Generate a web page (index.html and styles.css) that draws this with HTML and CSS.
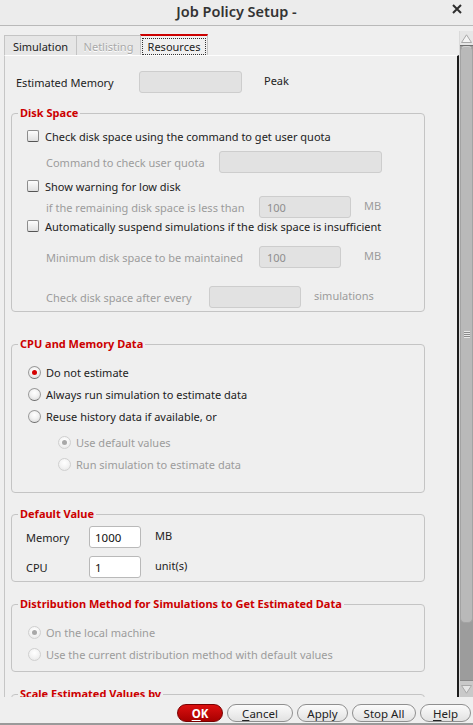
FILE: index.html
```html
<!DOCTYPE html>
<html>
<head>
<meta charset="utf-8">
<link rel="stylesheet" href="styles.css">
</head>
<body>
<div class="window">
  <header class="titlebar">
    <span class="title">Job Policy Setup -</span>
    <svg class="close" width="10" height="10" viewBox="0 0 10 10"><path d="M1 1L9 9M9 1L1 9" stroke="#2e2e2e" stroke-width="2"/></svg>
  </header>
  <div class="main">
    <div class="left">
      <div class="tabs">
        <div class="tab t-sim">Simulation</div>
        <div class="tab t-net disabled">Netlisting</div>
        <div class="tab t-res active"><span class="focus">Resources</span></div>
      </div>
      <div class="panel">
        <div class="estrow">
          <span class="estlabel">Estimated Memory</span>
          <span class="input dis w102"></span>
          <span class="peak">Peak</span>
        </div>

        <fieldset class="group g-disk">
          <legend>Disk Space</legend>
          <div class="row chk r1"><span class="checkbox"></span><span>Check disk space using the command to get user quota</span></div>
          <div class="row sub r2"><span class="lbl l173 dtext">Command to check user quota</span><span class="input dis w162"></span></div>
          <div class="row chk r3"><span class="checkbox"></span><span>Show warning for low disk</span></div>
          <div class="row sub r4"><span class="lbl l213 dtext">if the remaining disk space is less than</span><span class="input dis w91">100</span><span class="unit u13 dtext">MB</span></div>
          <div class="row chk r5"><span class="checkbox"></span><span>Automatically suspend simulations if the disk space is insufficient</span></div>
          <div class="row sub r6"><span class="lbl l213 dtext">Minimum disk space to be maintained</span><span class="input dis w81">100</span><span class="unit u23 dtext">MB</span></div>
          <div class="row sub r7"><span class="lbl l163 dtext">Check disk space after every</span><span class="input dis w91"></span><span class="unit u13 dtext">simulations</span></div>
        </fieldset>

        <fieldset class="group g-cpu">
          <legend>CPU and Memory Data</legend>
          <div class="row rad c1"><span class="radio on"></span><span>Do not estimate</span></div>
          <div class="row rad c2"><span class="radio"></span><span>Always run simulation to estimate data</span></div>
          <div class="row rad c3"><span class="radio"></span><span>Reuse history data if available, or</span></div>
          <div class="row rad subrad c4"><span class="radio dis on"></span><span class="dtext">Use default values</span></div>
          <div class="row rad subrad c5"><span class="radio dis"></span><span class="dtext">Run simulation to estimate data</span></div>
        </fieldset>

        <fieldset class="group g-def">
          <legend>Default Value</legend>
          <div class="row dv d1"><span class="dlabel">Memory</span><span class="input white w52">1000</span><span class="dunit">MB</span></div>
          <div class="row dv d2"><span class="dlabel">CPU</span><span class="input white w52">1</span><span class="dunit">unit(s)</span></div>
        </fieldset>

        <fieldset class="group g-dist">
          <legend>Distribution Method for Simulations to Get Estimated Data</legend>
          <div class="row rad e1"><span class="radio dis on"></span><span class="dtext">On the local machine</span></div>
          <div class="row rad e2"><span class="radio dis"></span><span class="dtext">Use the current distribution method with default values</span></div>
        </fieldset>

        <fieldset class="group g-scale">
          <legend>Scale Estimated Values by</legend>
          <div class="row rad"><span>&nbsp;</span></div>
        </fieldset>
      </div>
    </div>
    <div class="scrollbar">
      <div class="sb-btn sb-up"><svg width="11" height="9" viewBox="0 0 11 9"><path d="M0.5 8.5L5.5 0.8L10.5 8.5Z" fill="#f4f4f4" stroke="#a8a8a8" stroke-width="1"/></svg></div>
      <div class="sb-track">
        <div class="sb-thumb"><span class="grip"></span></div>
      </div>
      <div class="sb-btn sb-down"><svg width="11" height="9" viewBox="0 0 11 9"><path d="M0.5 0.5L5.5 8.2L10.5 0.5Z" fill="#e6e6e6" stroke="#a8a8a8" stroke-width="1"/></svg></div>
    </div>
  </div>
  <footer class="buttons">
    <span class="btn ok"><u>O</u>K</span>
    <span class="btn b-cancel"><u>C</u>ancel</span>
    <span class="btn b-apply">Apply</span>
    <span class="btn b-stop">Stop All</span>
    <span class="btn b-help"><u>H</u>elp</span>
  </footer>
</div>
</body>
</html>
```

FILE: styles.css
```css
html, body {
  margin: 0;
  padding: 0;
  background: #efefef;
}
body {
  font-family: "Noto Sans", "Open Sans", sans-serif;
  font-size: 11px;
  color: #222;
}
.window {
  width: 473px;
  height: 725px;
  display: flex;
  flex-direction: column;
  overflow: hidden;
  background: #efefef;
}
.titlebar {
  height: 26px;
  flex: none;
  box-sizing: border-box;
  border-bottom: 1px solid #b9b9b9;
  background: #ececec;
  display: flex;
  align-items: center;
  justify-content: center;
  position: relative;
}
.title {
  font-size: 14.5px;
  font-weight: 600;
  color: #333;
  margin-top: -4px;
}
.close {
  position: absolute;
  right: 11px;
  top: 4px;
}
.main {
  flex: 1;
  display: flex;
  padding-top: 5px;
  min-height: 0;
}
.left {
  width: 460px;
  flex: none;
  display: flex;
  flex-direction: column;
  padding-top: 4px;
  box-sizing: border-box;
}
.tabs {
  display: flex;
  padding-left: 4px;
  height: 20px;
  flex: none;
}
.tab {
  box-sizing: border-box;
  height: 20px;
  border: 1px solid #c4c4c4;
  border-bottom: none;
  background: #e6e6e6;
  display: flex;
  align-items: center;
  justify-content: center;
  color: #222;
  padding-top: 2px;
}
.t-sim { width: 73px; }
.t-net { width: 65px; margin-left: -1px; color: #a9a9a9; text-shadow: 0 1px 0 #fff; }
.t-res {
  width: 68px;
  margin-left: -1px;
  background: #f0f0f0;
  border-top: 2px solid #cc0000;
  height: 21px;
  margin-top: -1px;
  position: relative;
  z-index: 2;
  padding-top: 1px;
}
.focus {
  border: 1px dotted #333;
  padding: 0 5px;
  line-height: 15px;
  margin-top: 1px;
}
.panel {
  flex: 1;
  margin-left: 4px;
  width: 455px;
  box-sizing: border-box;
  border-left: 1px solid #c6c6c6;
  border-top: 1px solid #fdfdfd;
  border-right: 2px solid #1c1c1c;
  padding-left: 6px;
  overflow: hidden;
  min-height: 0;
}
.estrow {
  display: flex;
  align-items: center;
  height: 22px;
  margin-top: 15px;
  padding-left: 5px;
}
.estlabel { width: 123px; }
.peak { margin-left: 22px; margin-top: -4px; }

.input {
  box-sizing: border-box;
  height: 22px;
  border-radius: 3px;
  display: flex;
  align-items: center;
  padding-left: 7px;
  flex: none;
}
.input.dis {
  background: #e2e2e2;
  border: 1px solid #cdcdcd;
  color: #8e8e8e;
}
.input.white {
  background: #fff;
  border: 1px solid #b9b9b9;
  color: #111;
  padding-left: 5px;
  font-size: 11.5px;
}
.w102 { width: 103px; }
.w162 { width: 163px; }
.w91 { width: 92px; }
.w81 { width: 82px; }
.w52 { width: 52px; }

.group {
  margin: 0;
  padding: 0;
  width: 414px;
  box-sizing: border-box;
  border: 1px solid #c4c4c4;
  border-radius: 4px;
  min-width: 0;
}
.group legend {
  color: #cc0000;
  font-weight: bold;
  font-size: 11px;
  line-height: 14px;
  padding: 0 2px;
  margin-left: 6px;
}
.row {
  display: flex;
  align-items: center;
}
.row.chk, .row.rad { height: 16px; padding-left: 15px; }
.row.sub { height: 22px; padding-left: 34px; }
.dtext { color: #9c9c9c; }
.lbl { flex: none; }
.l173 { width: 173px; }
.l213 { width: 213px; }
.l163 { width: 163px; }
.unit { margin-top: -3px; }
.u13 { margin-left: 13px; }
.u23 { margin-left: 23px; }

.checkbox {
  width: 10px;
  height: 10px;
  border: 1px solid #8d8d8d;
  border-bottom-color: #555;
  border-radius: 2px;
  background: linear-gradient(#fdfdfd, #e0e0e0);
  margin-right: 6px;
  flex: none;
}
.radio {
  width: 11px;
  height: 11px;
  border: 1px solid #9a9a9a;
  border-bottom-color: #6c6c6c;
  border-radius: 50%;
  background: radial-gradient(circle at 50% 35%, #ffffff 0%, #f2f2f2 45%, #d4d4d4 100%);
  margin-left: 1px;
  margin-right: 5px;
  flex: none;
  display: flex;
  align-items: center;
  justify-content: center;
}
.radio.on::after {
  content: "";
  width: 5px;
  height: 5px;
  border-radius: 50%;
  background: #d40000;
}
.radio.dis {
  border-color: #d0d0d0;
  background: radial-gradient(circle at 50% 35%, #ffffff 0%, #f4f4f4 50%, #e4e4e4 100%);
}
.radio.dis.on::after { background: #a8a8a8; }

.g-disk { margin-top: 13px; padding-bottom: 3px; }
.g-disk .r1 { margin-top: 8px; }
.g-disk .r2 { margin-top: 7px; }
.g-disk .r3 { margin-top: 5px; }
.g-disk .r4 { margin-top: 2px; }
.g-disk .r5 { margin-top: 0; }
.g-disk .r6 { margin-top: 12px; }
.g-disk .r7 { margin-top: 18px; }

.g-cpu { margin-top: 25px; padding-bottom: 20px; }
.g-cpu .c1 { margin-top: 13px; }
.g-cpu .c2, .g-cpu .c3 { margin-top: 6px; }
.g-cpu .c4 { margin-top: 10px; }
.g-cpu .c5 { margin-top: 6px; }
.subrad { padding-left: 45px !important; }

.g-def { margin-top: 14px; padding-bottom: 3px; }
.row.dv { height: 22px; padding-left: 14px; }
.g-def .d1 { margin-top: 5px; }
.g-def .d2 { margin-top: 8px; }
.dlabel { width: 63px; flex: none; }
.dunit { margin-left: 14px; margin-top: -3px; }

.g-dist { margin-top: 15px; padding-bottom: 9px; }
.g-dist .e1 { margin-top: 13px; }
.g-dist .e2 { margin-top: 6px; }

.g-scale { margin-top: 15px; height: 40px; }

.scrollbar {
  flex: none;
  display: flex;
  flex-direction: column;
  background: #b4b4b4;
  border-left: 1px solid #dadada;
  box-sizing: border-box;
  width: 14px;
  margin-left: -1px;
}
.sb-btn {
  flex: none;
  display: flex;
  align-items: center;
  justify-content: center;
}
.sb-up {
  height: 15px;
  background: #e6e6e6;
  border-bottom: 1px solid #6f6f6f;
  box-sizing: border-box;
}
.sb-down {
  height: 17px;
  background: #c9c9c9;
  border-top: 1px solid #8a8a8a;
  box-sizing: border-box;
}
.sb-track {
  flex: 1;
  background: #9c9c9c;
  display: flex;
  flex-direction: column;
}
.sb-thumb {
  height: 577px;
  background: #b9b9b9;
  border: 1px solid #a3a3a3;
  border-top-color: #d2d2d2;
  border-radius: 5px;
  box-sizing: border-box;
  display: flex;
  align-items: center;
  justify-content: center;
}
.grip {
  width: 6px;
  height: 7px;
  background: repeating-linear-gradient(#e8e8e8 0 1px, #8a8a8a 1px 2px);
}

.buttons {
  height: 28px;
  flex: none;
  box-sizing: border-box;
  display: flex;
  justify-content: flex-end;
  align-items: flex-start;
  padding-top: 7px;
  padding-right: 2px;
  gap: 4px;
  background: #efefef;
  border-bottom: 2px solid #9a9a9a;
}
.btn {
  box-sizing: border-box;
  height: 18px;
  border-radius: 9px;
  border: 1px solid #8f8f8f;
  background: linear-gradient(#fbfbfb, #e2e2e2);
  display: flex;
  align-items: center;
  justify-content: center;
  font-size: 11.5px;
  color: #222;
}
.btn u { text-decoration-thickness: 1px; text-underline-offset: 2px; }
.ok {
  width: 46px;
  background: linear-gradient(#dc1010, #a80000);
  border-color: #7a0000;
  color: #fff;
  font-weight: bold;
}
.b-cancel { width: 66px; }
.b-apply { width: 51px; }
.b-stop { width: 64px; }
.b-help { width: 51px; }
```
